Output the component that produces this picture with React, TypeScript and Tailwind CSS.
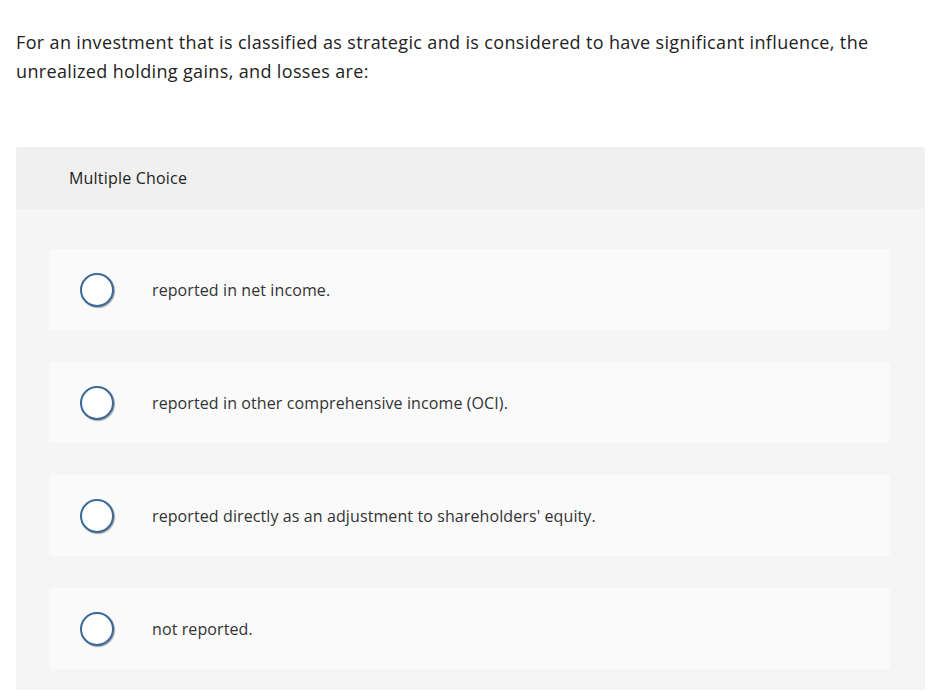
const choices = [
  "reported in net income.",
  "reported in other comprehensive income (OCI).",
  "reported directly as an adjustment to shareholders' equity.",
  "not reported.",
];

export default function App() {
  return (
    <main className="min-h-screen bg-white px-4 pt-[28px] font-['Open_Sans',_sans-serif] text-[#222]">
      <p className="text-[18px] leading-[29px] tracking-[0.35px]">
        For an investment that is classified as strategic and is considered to have significant influence, the
        unrealized holding gains, and losses are:
      </p>

      <section className="mt-[61px] w-[909px] overflow-hidden rounded-t-[3px] bg-[#f5f5f5]">
        <header className="flex h-[62px] items-center bg-[#f0f0f0] px-[53px]">
          <h2 className="text-[16px] tracking-[0.2px] text-[#222]">Multiple Choice</h2>
        </header>

        <div className="flex flex-col gap-[32px] pl-[33px] pr-[35px] pt-[40px] pb-[21px]">
          {choices.map((choice) => (
            <label
              key={choice}
              className="flex h-[81px] cursor-pointer items-center rounded-[4px] bg-[#fafafa] pl-[31px]"
            >
              <span className="h-[34px] w-[34px] shrink-0 rounded-full border-2 border-[#3b6a98] bg-white shadow-[1px_1px_1px_rgba(0,0,0,0.35)]" />
              <span className="ml-[38px] text-[16px] tracking-[0.1px] text-[#333]">{choice}</span>
            </label>
          ))}
        </div>
      </section>
    </main>
  );
}
